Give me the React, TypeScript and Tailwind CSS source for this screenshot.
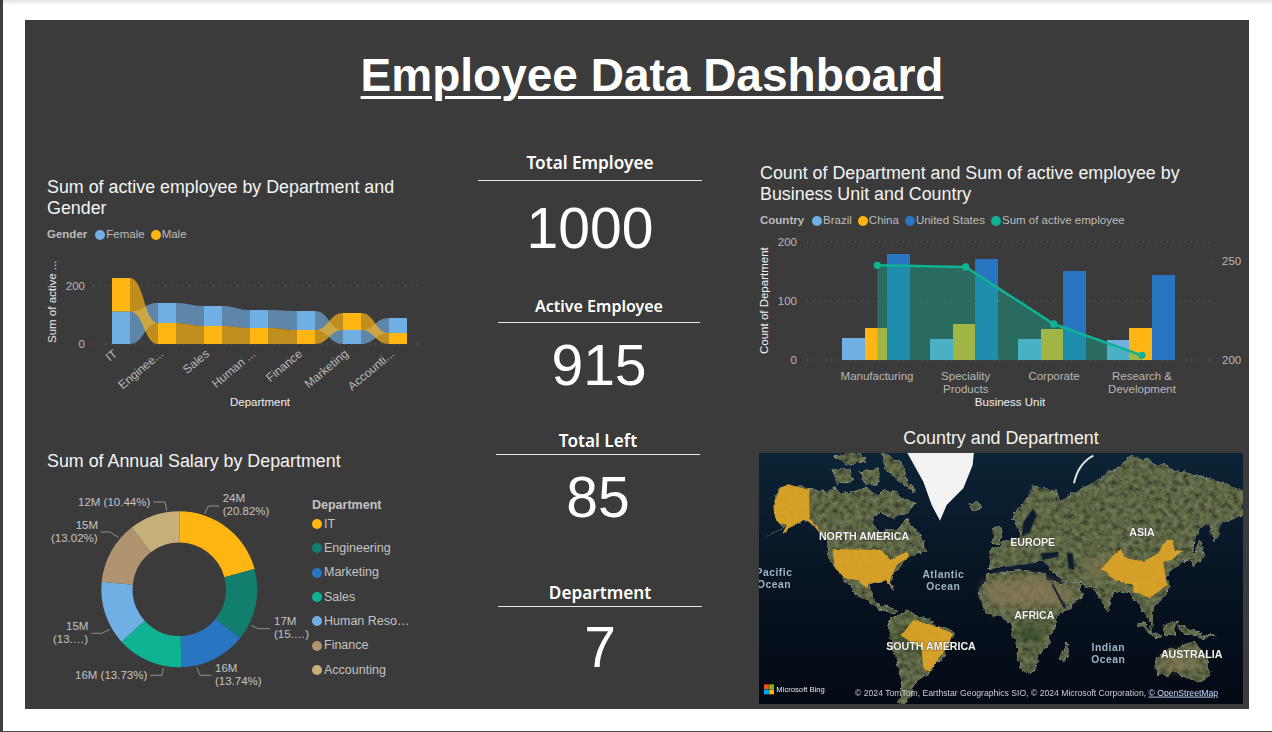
import React from 'react';

const BLUE = '#70afe3';
const AMBER = '#ffb612';
const TEAL = '#0fb394';

// bottom, split, top of each ribbon column + which series sits on top
const RIBBONS = [
    { x: 112, label: 'IT', split: 311.7, top: 278, maleTop: true },
    { x: 158, label: 'Enginee...', split: 323, top: 303, maleTop: false },
    { x: 204, label: 'Sales', split: 326, top: 306, maleTop: false },
    { x: 250, label: 'Human ...', split: 328, top: 310, maleTop: false },
    { x: 297, label: 'Finance', split: 330, top: 311, maleTop: false },
    { x: 343, label: 'Marketing', split: 330, top: 313, maleTop: true },
    { x: 389, label: 'Accounti...', split: 333, top: 318, maleTop: false },
];
const BASE = 344;

function band(x1: number, a1: number, b1: number, x2: number, a2: number, b2: number) {
    const m = (x1 + x2) / 2;
    return `M${x1} ${a1} C${m} ${a1} ${m} ${a2} ${x2} ${a2} L${x2} ${b2} C${m} ${b2} ${m} ${b1} ${x1} ${b1} Z`;
}

function RibbonChart() {
    const gaps = RIBBONS.slice(0, -1).map((r, i) => {
        const n = RIBBONS[i + 1];
        const male = (c: typeof r) => (c.maleTop ? [c.top, c.split] : [c.split, BASE]);
        const female = (c: typeof r) => (c.maleTop ? [c.split, BASE] : [c.top, c.split]);
        const [m1, m2] = male(r);
        const [m3, m4] = male(n);
        const [f1, f2] = female(r);
        const [f3, f4] = female(n);
        return {
            key: r.label,
            male: band(r.x + 18, m1, m2, n.x, m3, m4),
            female: band(r.x + 18, f1, f2, n.x, f3, f4),
        };
    });
    return (
        <svg width={410} height={170} viewBox="30 245 410 170" className="block">
            <line x1={93} x2={423} y1={285.7} y2={285.7} stroke="#6f6f6f" strokeDasharray="1 5" />
            <line x1={93} x2={423} y1={344} y2={344} stroke="#6f6f6f" strokeDasharray="1 5" />
            {gaps.map((g) => (
                <g key={g.key}>
                    <path d={g.female} fill={BLUE} opacity={0.65} />
                    <path d={g.male} fill={AMBER} opacity={0.68} />
                </g>
            ))}
            {RIBBONS.map((r) => (
                <g key={r.label}>
                    <rect x={r.x} y={r.top} width={18} height={r.split - r.top} fill={r.maleTop ? AMBER : BLUE} />
                    <rect x={r.x} y={r.split} width={18} height={BASE - r.split} fill={r.maleTop ? BLUE : AMBER} />
                    <text
                        x={r.x + 6}
                        y={355}
                        textAnchor="end"
                        fontSize={12}
                        fill="#b8b8b8"
                        transform={`rotate(-40 ${r.x + 6} 355)`}
                    >
                        {r.label}
                    </text>
                </g>
            ))}
            <text x={85} y={290} textAnchor="end" fontSize={11.5} fill="#b8b8b8">200</text>
            <text x={85} y={348} textAnchor="end" fontSize={11.5} fill="#b8b8b8">0</text>
            <text x={55.5} y={343} fontSize={11.5} fill="#e6e6e6" transform="rotate(-90 55.5 343)">Sum of active ...</text>
            <text x={260} y={406} textAnchor="middle" fontSize={11.5} fill="#f0f0f0">Department</text>
        </svg>
    );
}

const SLICES = [
    { pct: 20.82, color: AMBER },
    { pct: 15.0, color: '#117e6e' },
    { pct: 13.74, color: '#2876c2' },
    { pct: 13.73, color: TEAL },
    { pct: 13.25, color: BLUE },
    { pct: 13.02, color: '#b09470' },
    { pct: 10.44, color: '#c6b07a' },
];

function slicePath(start: number, end: number) {
    const cx = 179.3;
    const cy = 589.3;
    const R = 78;
    const r = 46.7;
    const p = (rad: number, a: number) => `${cx + rad * Math.sin(a)} ${cy - rad * Math.cos(a)}`;
    const large = end - start > Math.PI ? 1 : 0;
    return `M${p(R, start)} A${R} ${R} 0 ${large} 1 ${p(R, end)} L${p(r, end)} A${r} ${r} 0 ${large} 0 ${p(r, start)} Z`;
}

const LEADERS = [
    '204.7 514 208.3 506 219.3 506',
    '251.3 625.3 258.3 628.7 270 628.7',
    '196.7 667.3 200 675.3 211.7 675.3',
    '163.3 668 162 675.3 150 675.3',
    '110 629.3 101.7 633.3 91.7 633.3',
    '118.3 537.3 110 532 100.7 532',
    '166.7 510.7 165 502 153.3 502',
];

const DONUT_LABELS: [number, number, string][] = [
    [222.7, 502, '24M'],
    [222.7, 515, '(20.82%)'],
    [274, 625, '17M'],
    [274, 638, '(15.…)'],
    [215, 672, '16M'],
    [215, 685, '(13.74%)'],
    [75, 679, '16M (13.73%)'],
    [66, 630, '15M'],
    [53, 643, '(13.…)'],
    [75.7, 529, '15M'],
    [51, 542, '(13.02%)'],
    [78, 506, '12M (10.44%)'],
];

function DonutChart() {
    let acc = 0;
    const total = SLICES.reduce((s, x) => s + x.pct, 0);
    return (
        <svg width={280} height={225} viewBox="30 480 280 225" className="block shrink-0">
            {SLICES.map((s) => {
                const a = (acc / total) * Math.PI * 2;
                acc += s.pct;
                const b = (acc / total) * Math.PI * 2;
                return <path key={s.color} d={slicePath(a, b)} fill={s.color} />;
            })}
            {LEADERS.map((pts) => (
                <polyline key={pts} points={pts} fill="none" stroke="#8f8f8f" strokeWidth={1} />
            ))}
            {DONUT_LABELS.map(([x, y, t]) => (
                <text key={`${x}-${y}`} x={x} y={y} fontSize={11.5} fill="#c4c4c4">{t}</text>
            ))}
        </svg>
    );
}

const DEPARTMENTS = [
    { name: 'IT', color: AMBER },
    { name: 'Engineering', color: '#117e6e' },
    { name: 'Marketing', color: '#2876c2' },
    { name: 'Sales', color: TEAL },
    { name: 'Human Reso…', color: BLUE },
    { name: 'Finance', color: '#b09470' },
    { name: 'Accounting', color: '#c6b07a' },
];

function ComboChart() {
    const z = (x: number, y: number) => `${750 + x / 3},${160 + y / 3}`;
    const groups = [
        [[276, 345, 534], [345, 411, 504], [411, 480, 282]],
        [[540, 609, 537], [609, 675, 492], [675, 744, 297]],
        [[804, 873, 537], [873, 939, 507], [939, 1008, 333]],
        [[1071, 1137, 540], [1137, 1206, 504], [1206, 1275, 345]],
    ];
    const colors = [BLUE, AMBER, '#2876c2'];
    const line = [[382, 316], [647, 321], [911, 492], [1176, 586]];
    const linePts = line.map(([x, y]) => z(x, y)).join(' ');
    const area = `${z(382, 600)} ${linePts} ${z(1176, 600)}`;
    return (
        <svg width={499} height={180} viewBox="750 232 499 180" className="block">
            {[242, 301, 360].map((y) => (
                <line key={y} x1={807} x2={1212} y1={y} y2={y} stroke="#6f6f6f" strokeDasharray="1 5" />
            ))}
            <line x1={1212} x2={1216} y1={261} y2={261} stroke="#6f6f6f" strokeDasharray="1 3" />
            {groups.map((g) =>
                g.map(([a, b, t], i) => (
                    <rect
                        key={`${a}`}
                        x={750 + a / 3}
                        y={160 + t / 3}
                        width={(b - a) / 3}
                        height={(600 - t) / 3}
                        fill={colors[i]}
                    />
                ))
            )}
            <polygon points={area} fill={TEAL} opacity={0.4} />
            <polyline points={linePts} fill="none" stroke={TEAL} strokeWidth={2.5} />
            {line.map(([x, y]) => (
                <circle key={x} cx={750 + x / 3} cy={160 + y / 3} r={3.7} fill={TEAL} />
            ))}
            {[[797, 246, '200'], [797, 305, '100'], [797, 364, '0']].map(([x, y, t]) => (
                <text key={t} x={x} y={y} textAnchor="end" fontSize={11.5} fill="#b8b8b8">{t}</text>
            ))}
            <text x={1222} y={265} fontSize={11.5} fill="#b8b8b8">250</text>
            <text x={1222} y={364} fontSize={11.5} fill="#b8b8b8">200</text>
            <text x={768} y={354} fontSize={11.5} fill="#f0f0f0" transform="rotate(-90 768 354)">Count of Department</text>
            {[
                [877, 380, 'Manufacturing'],
                [965.7, 380, 'Speciality'],
                [965.7, 393, 'Products'],
                [1054, 380, 'Corporate'],
                [1142, 380, 'Research &'],
                [1142, 393, 'Development'],
            ].map(([x, y, t]) => (
                <text key={t} x={x} y={y} textAnchor="middle" fontSize={11.5} fill="#b8b8b8">{t}</text>
            ))}
            <text x={1010} y={406} textAnchor="middle" fontSize={11.5} fill="#f0f0f0">Business Unit</text>
        </svg>
    );
}

const MAP_LABELS: [number, number, string][] = [
    [342, 345, 'NORTH AMERICA'],
    [848, 362, 'EUROPE'],
    [1176, 333, 'ASIA'],
    [853, 582, 'AFRICA'],
    [543, 674, 'SOUTH AMERICA'],
    [1325, 698, 'AUSTRALIA'],
];
const OCEAN_LABELS: [number, number, string][] = [
    [72, 452, 'Pacific'],
    [72, 488, 'Ocean'],
    [580, 458, 'Atlantic'],
    [580, 494, 'Ocean'],
    [1075, 678, 'Indian'],
    [1075, 713, 'Ocean'],
];

function WorldMap() {
    return (
        <svg width={484} height={251} viewBox="27 84 1452 753" className="block ml-[9px]">
            <defs>
                <linearGradient id="sea" x1="0" y1="0" x2="0" y2="1">
                    <stop offset="0" stopColor="#0b2436" />
                    <stop offset="0.45" stopColor="#081524" />
                    <stop offset="1" stopColor="#040a14" />
                </linearGradient>
                {/* rough coastline + mottled ground */}
                <filter id="land" x="0" y="0" width="100%" height="100%">
                    <feTurbulence type="fractalNoise" baseFrequency="0.035" numOctaves={4} seed={11} result="warp" />
                    <feDisplacementMap in="SourceGraphic" in2="warp" scale={26} xChannelSelector="R" yChannelSelector="G" result="shape" />
                    <feTurbulence type="fractalNoise" baseFrequency="0.06" numOctaves={4} seed={7} result="n" />
                    <feColorMatrix
                        in="n"
                        type="matrix"
                        values="1.3 0 0 0 0  1.3 0 0 0 0  1.3 0 0 0 0  0 0 0 0 1"
                        result="g"
                    />
                    <feComposite in="g" in2="shape" operator="in" result="c" />
                    <feBlend in="c" in2="shape" mode="multiply" result="b" />
                    <feGaussianBlur in="b" stdDeviation="1.6" />
                </filter>
                <filter id="soft">
                    <feGaussianBlur stdDeviation="1.5" />
                </filter>
                <filter id="patch" x="-30%" y="-30%" width="160%" height="160%">
                    <feGaussianBlur stdDeviation="14" />
                </filter>
                <filter id="country" x="-5%" y="-5%" width="110%" height="110%">
                    <feTurbulence type="fractalNoise" baseFrequency="0.05" numOctaves={3} seed={4} result="warp" />
                    <feDisplacementMap in="SourceGraphic" in2="warp" scale={9} xChannelSelector="R" yChannelSelector="G" />
                    <feGaussianBlur stdDeviation="1" />
                </filter>
                <clipPath id="mapclip">
                    <rect x={27} y={84} width={1452} height={753} />
                </clipPath>
            </defs>
            <g clipPath="url(#mapclip)">
                <rect x={27} y={84} width={1452} height={753} fill="url(#sea)" />
                <g filter="url(#land)" fill="#6f7a52">
                    {/* north america */}
                    <path d="M27 350 L70 325 L105 305 L80 288 L68 240 L90 182 L180 190 L225 205 L250 190 L300 205 L345 185 L385 215 L400 190 L450 205 L490 235 L470 268 L430 282 L385 262 L365 295 L395 322 L440 312 L470 285 L515 335 L532 372 L480 392 L435 440 L422 470 L432 495 L405 465 L355 480 L370 525 L405 545 L445 555 L420 565 L370 540 L320 510 L285 465 L245 410 L225 340 L180 285 L110 300 Z" />
                    {/* arctic islands */}
                    <path d="M250 88 L330 84 L345 112 L290 118 Z" />
                    <path d="M245 135 L300 128 L310 170 L262 178 Z" />
                    <path d="M335 140 L385 125 L390 175 L345 178 Z" />
                    <path d="M395 84 L450 110 L495 205 L440 165 L405 130 Z" />
                    {/* south america */}
                    <path d="M418 592 L470 548 L530 585 L612 625 L590 680 L540 742 L500 772 L470 837 L445 837 L455 760 L432 680 L420 640 Z" />
                    {/* africa */}
                    <path d="M685 510 L710 450 L790 435 L880 445 L905 480 L945 550 L992 510 L960 548 L925 572 L912 620 L872 690 L842 752 L810 730 L795 640 L770 578 L710 565 Z" />
                    <path d="M930 705 L950 650 L960 655 L945 708 Z" />
                    {/* arabia */}
                    <path d="M905 468 L985 478 L1002 510 L950 545 Z" />
                    {/* eurasia */}
                    <path d="M715 432 L722 372 L772 345 L815 340 L785 275 L850 185 L915 195 L930 225 L1030 175 L1100 130 L1150 92 L1280 135 L1350 155 L1479 190 L1479 272 L1420 292 L1395 345 L1370 300 L1330 335 L1332 392 L1282 420 L1252 450 L1262 490 L1212 545 L1212 612 L1190 580 L1150 512 L1092 500 L1075 562 L1030 490 L985 478 L940 468 L880 410 L800 420 Z" />
                    <path d="M726 310 L745 298 L757 350 L725 356 Z" />
                    <path d="M658 236 L696 230 L692 252 L664 254 Z" />
                    <path d="M1325 392 L1352 350 L1366 392 L1332 422 Z" />
                    {/* indonesia */}
                    <path d="M1168 590 L1232 630 L1222 642 L1162 600 Z" />
                    <path d="M1238 600 L1282 588 L1276 628 L1245 632 Z" />
                    <path d="M1285 600 L1400 640 L1300 628 Z" />
                    {/* australia */}
                    <path d="M1215 700 L1270 670 L1330 648 L1372 690 L1382 750 L1342 772 L1280 745 L1220 752 Z" />
                </g>
                {/* ground colour patches */}
                <g filter="url(#patch)">
                    <path fill="#8a7a56" opacity={0.75} d="M700 470 L880 455 L985 510 L930 540 L780 545 L710 530 Z" />
                    <path fill="#8a7a56" opacity={0.5} d="M1000 400 L1100 395 L1110 440 L1020 470 Z" />
                    <path fill="#8a7a56" opacity={0.6} d="M1240 690 L1340 675 L1350 735 L1250 735 Z" />
                    <path fill="#26401e" opacity={0.6} d="M440 610 L540 610 L530 680 L450 670 Z" />
                    <path fill="#26401e" opacity={0.6} d="M800 600 L880 600 L870 650 L810 650 Z" />
                </g>
                {/* inland water */}
                <g fill="#0b1c2e" filter="url(#soft)">
                    <path d="M372 272 L428 278 L410 310 L378 300 Z" />
                    <path d="M725 432 L880 410 L902 428 L800 432 L725 445 Z" />
                    <path d="M872 385 L925 380 L925 395 L878 405 Z" />
                    <path d="M950 385 L968 385 L974 435 L956 430 Z" />
                    <path d="M905 480 L910 478 L948 548 L942 550 Z" />
                    <path d="M820 290 L850 250 L860 270 L840 320 L815 335 Z" />
                </g>
                {/* greenland */}
                <path fill="#f3f4f2" filter="url(#soft)" d="M470 80 L672 80 L668 120 L640 190 L590 240 L570 287 L545 240 L520 170 Z" />
                <path fill="none" stroke="#dfe2df" strokeWidth={6} filter="url(#soft)" d="M1030 92 Q985 115 972 175" />
                {/* highlighted countries */}
                <g fill="#e0a526" opacity={0.92} filter="url(#country)">
                    <path d="M70 240 L90 190 L115 178 L178 195 L178 280 L222 325 L200 312 L170 285 L130 300 L95 330 L110 300 L80 290 L72 262 Z" />
                    <path d="M247 372 L395 375 L420 405 L470 380 L475 395 L440 420 L420 465 L425 490 L410 465 L355 475 L350 490 L320 465 L285 460 L255 430 Z" />
                    <path d="M1055 430 L1110 372 L1130 400 L1180 410 L1225 385 L1245 345 L1265 345 L1275 375 L1300 378 L1265 405 L1240 410 L1250 480 L1200 520 L1150 500 L1150 480 L1090 465 Z" />
                    <path d="M455 630 L490 585 L530 595 L610 625 L590 670 L565 700 L540 740 L520 730 L515 670 L470 645 Z" />
                </g>
                {OCEAN_LABELS.map(([x, y, t]) => (
                    <text key={`${x}-${y}`} x={x} y={y} textAnchor="middle" fontSize={31} fontWeight={700} fill="#a0b4c6" letterSpacing={1.5}>{t}</text>
                ))}
                {MAP_LABELS.map(([x, y, t]) => (
                    <text key={t} x={x} y={y} textAnchor="middle" fontSize={32} fontWeight={700} fill="#f4f4f4" stroke="#1a2418" strokeWidth={3} paintOrder="stroke" strokeOpacity={0.5}>{t}</text>
                ))}
                <rect x={42} y={778} width={14.5} height={14.5} fill="#f25022" />
                <rect x={57.5} y={778} width={14.5} height={14.5} fill="#7fba00" />
                <rect x={42} y={793.5} width={14.5} height={14.5} fill="#00a4ef" />
                <rect x={57.5} y={793.5} width={14.5} height={14.5} fill="#ffb900" />
                <text x={79} y={801} fontSize={23} fill="#e8e8e8">Microsoft Bing</text>
                <text x={315} y={812} fontSize={25.9} fill="#c8ccd2">© 2024 TomTom, Earthstar Geographics SIO, © 2024 Microsoft Corporation, <tspan fill="#c9dcff" textDecoration="underline">© OpenStreetMap</tspan></text>
            </g>
        </svg>
    );
}

function LegendDot({ color, label }: { color: string; label: string }) {
    return (
        <span className="flex items-center gap-px ml-[6px]">
            <span className="w-[10px] h-[10px] rounded-full" style={{ backgroundColor: color }} />
            <span>{label}</span>
        </span>
    );
}

export default function App() {
    return (
        <div className="w-[1272px] h-[732px] flex overflow-hidden bg-white font-['Liberation_Sans',Arial,sans-serif]">
            <div className="w-[3px] bg-[#3c4043]" />
            <div className="flex-1 flex flex-col">
                <div className="h-[5px] bg-gradient-to-b from-[#e2e2e2] to-white" />
                <div className="pl-[22px] pt-[15px]">
                    <div className="w-[1224px] h-[689px] bg-[#3b3b3b] text-white">
                        <div className="h-[130px] pl-[30px] pt-[25px] text-center">
                            <h1 className="text-[46px] leading-[60px] font-bold underline underline-offset-[5px] decoration-[3px]">Employee Data Dashboard</h1>
                        </div>
                        <div className="grid grid-cols-[445px_280px_499px]">
                            {/* left charts */}
                            <div className="pl-[5px] pt-[27px]">
                                <h2 className="pl-[17px] text-[17.85px] leading-[21px] text-[#f4f4f4] w-[390px]">Sum of active employee by Department and Gender</h2>
                                <div className="mt-[9px] pl-[17px] h-[14px] flex items-center text-[11.5px] text-[#bdbdbd]">
                                    <span className="font-bold mr-[2px]">Gender</span>
                                    <LegendDot color={BLUE} label="Female" />
                                    <LegendDot color={AMBER} label="Male" />
                                </div>
                                <div className="mt-[3px]"><RibbonChart /></div>
                                <h2 className="mt-[36px] pl-[17px] text-[17.85px] leading-[21px] text-[#f4f4f4]">Sum of Annual Salary by Department</h2>
                                <div className="mt-[8px] flex">
                                    <DonutChart />
                                    <div className="pl-[2px] pt-[18px] text-[12.5px] text-[#c4c4c4]">
                                        <div className="font-bold leading-[14px]">Department</div>
                                        {DEPARTMENTS.map((d) => (
                                            <div key={d.name} className="h-[24.3px] flex items-center gap-px">
                                                <span className="w-[10px] h-[10px] rounded-full mr-px" style={{ backgroundColor: d.color }} />
                                                <span className="whitespace-nowrap">{d.name}</span>
                                            </div>
                                        ))}
                                    </div>
                                </div>
                            </div>
                            {/* kpi column */}
                            <div className="text-center">
                                <div className="ml-[8px] w-[224px]">
                                    <div className="font-['Noto_Sans',sans-serif] font-semibold text-[17.2px] leading-[24px] pt-px pb-[5px] border-b border-[#e8e8e8]">Total Employee</div>
                                    <div className="mt-[15px] text-[57px] leading-[64px]">1000</div>
                                </div>
                                <div className="mt-[34px] ml-[28px] w-[202px]">
                                    <div className="font-['Noto_Sans',sans-serif] font-semibold text-[16px] leading-[24px] pb-[4px] border-b border-[#e8e8e8]">Active Employee</div>
                                    <div className="mt-[10px] text-[57px] leading-[64px]">915</div>
                                </div>
                                <div className="mt-[31px] ml-[26px] w-[204px]">
                                    <div className="font-['Noto_Sans',sans-serif] font-semibold text-[17.2px] leading-[24px] pt-px pb-px border-b border-[#e8e8e8]">Total Left</div>
                                    <div className="mt-[10px] text-[57px] leading-[64px]">85</div>
                                </div>
                                <div className="mt-[51px] ml-[28px] w-[204px]">
                                    <div className="font-['Noto_Sans',sans-serif] font-semibold text-[17.2px] leading-[24px] pt-px pb-px border-b border-[#e8e8e8]">Department</div>
                                    <div className="mt-[8px] text-[57px] leading-[64px]">7</div>
                                </div>
                            </div>
                            {/* right charts */}
                            <div className="pt-[13px]">
                                <h2 className="pl-[10px] text-[17.85px] leading-[21px] text-[#f4f4f4] w-[450px]">Count of Department and Sum of active employee by Business Unit and Country</h2>
                                <div className="mt-[9px] pl-[10px] h-[14px] flex items-center text-[11.5px] text-[#bdbdbd]">
                                    <span className="font-bold mr-[2px]">Country</span>
                                    <LegendDot color={BLUE} label="Brazil" />
                                    <LegendDot color={AMBER} label="China" />
                                    <LegendDot color="#2876c2" label="United States" />
                                    <LegendDot color={TEAL} label="Sum of active employee" />
                                </div>
                                <div className="mt-[4px]"><ComboChart /></div>
                                <h2 className="mt-[16px] mb-[4px] pl-[3px] text-center text-[17.85px] leading-[21px] text-[#f4f4f4]">Country and Department</h2>
                                <WorldMap />
                            </div>
                        </div>
                    </div>
                </div>
                <div className="mt-auto h-px bg-[#4a4a4a]" />
            </div>
        </div>
    );
}
